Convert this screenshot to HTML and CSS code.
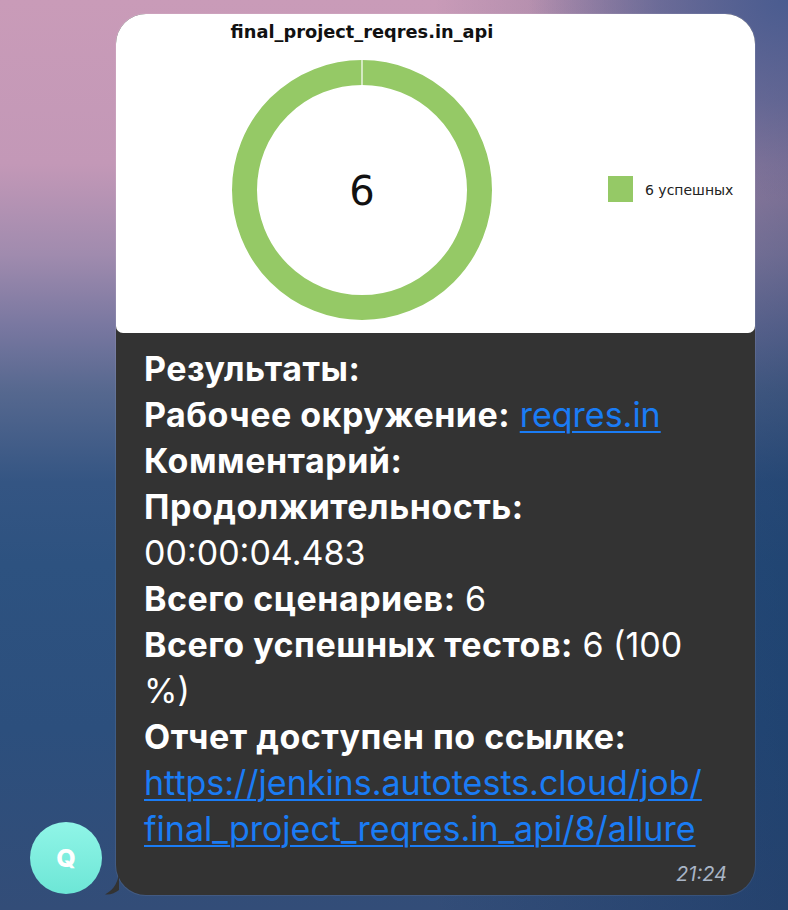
FILE: index.html
```html
<!DOCTYPE html>
<html lang="ru">
<head>
<meta charset="utf-8">
<link rel="stylesheet" href="styles.css">
</head>
<body>
<div class="chat">
  <div class="avatar">Q</div>
  <div class="bubble">
    <div class="chart">
      <svg width="639" height="319" viewBox="0 0 639 319">
        <text class="chart-title" x="246" y="24" text-anchor="middle">final_project_reqres.in_api</text>
        <circle cx="246" cy="176" r="117.5" fill="none" stroke="#95c966" stroke-width="25"/>
        <line x1="246" y1="45" x2="246" y2="72" stroke="#ffffff" stroke-width="1.2"/>
        <text class="chart-num" x="246" y="191" text-anchor="middle">6</text>
        <rect x="492" y="162" width="25" height="26" fill="#95c966"/>
        <text class="chart-legend" x="529" y="181">6 успешных</text>
      </svg>
    </div>
    <div class="text">
      <p class="msg"><b>Результаты:</b><br><b>Рабочее окружение:</b> <a href="#">reqres.in</a><br><b>Комментарий:</b><br><b>Продолжительность:</b><br>00:00:04.483<br><b>Всего сценариев:</b> 6<br><b>Всего успешных тестов:</b> 6 (100<br>%)<br><b>Отчет доступен по ссылке:</b><br><a href="#">https://jenkins.autotests.cloud/job/<br>final_project_reqres.in_api/8/allure</a></p>
      <div class="time">21:24</div>
    </div>
    <svg class="tail" width="14" height="22" viewBox="0 0 14 22">
      <path d="M14 0 C13 8 10 16 0 21.5 C6 22 10 20 14 17 Z" fill="#333333"/>
    </svg>
  </div>
</div>
</body>
</html>
```
FILE: styles.css
```css
html, body {
  margin: 0;
  padding: 0;
}
body {
  width: 788px;
  height: 910px;
  overflow: hidden;
  background:
    radial-gradient(ellipse 260px 200px at 100% 0%, #4a5c90 0%, rgba(74,92,144,0.6) 50%, rgba(74,92,144,0) 100%),
    linear-gradient(to right, rgba(10,40,90,0) 55%, rgba(10,45,90,0.35) 100%),
    linear-gradient(180deg, #c99bb8 0%, #c398b7 18%, #a08bae 28%, #7877a0 36%, #56688f 43%, #345583 53%, #2d5280 62%, #2c4f7d 80%, #334d78 100%);
  font-family: Inter, "Noto Sans", sans-serif;
}
.chat {
  display: flex;
  align-items: flex-end;
  padding: 14px 0 15px 30px;
  gap: 14px;
}
.avatar {
  width: 72px;
  height: 72px;
  border-radius: 50%;
  background: linear-gradient(180deg, #90f5e7 0%, #6de6d6 100%);
  color: #ffffff;
  font-family: Inter, sans-serif;
  font-weight: 800;
  font-size: 25px;
  display: flex;
  align-items: center;
  justify-content: center;
  margin-bottom: 1px;
}
.bubble {
  position: relative;
  width: 639px;
  height: 881px;
  background: #333333;
  border-radius: 30px;
  box-shadow: 0 0 0 1px rgba(255,255,255,0.08);
}
.chart {
  height: 319px;
  background: #ffffff;
  border-radius: 30px 30px 7px 7px;
  overflow: hidden;
}
.chart svg {
  display: block;
}
.chart-title {
  font-family: "DejaVu Sans", sans-serif;
  font-weight: bold;
  font-size: 17.8px;
  fill: #111111;
}
.chart-num {
  font-family: "DejaVu Sans", sans-serif;
  font-size: 40px;
  fill: #111111;
}
.chart-legend {
  font-family: "DejaVu Sans", sans-serif;
  font-size: 14px;
  fill: #222222;
}
.text {
  padding: 13px 28px 0 28px;
}
.msg {
  margin: 0;
  font-size: 34px;
  line-height: 46px;
  color: #ffffff;
  font-weight: 400;
  white-space: nowrap;
}
.msg b {
  font-weight: 700;
  letter-spacing: 0.5px;
}
.msg a {
  color: #1a7cf5;
  text-decoration: underline;
  text-decoration-thickness: 2px;
  text-underline-offset: 4px;
}
.time {
  text-align: right;
  font-size: 20px;
  font-style: italic;
  color: #a9b5c6;
  line-height: 24px;
  margin-top: 10px;
}
.tail {
  position: absolute;
  left: -11px;
  bottom: 0;
}
```
